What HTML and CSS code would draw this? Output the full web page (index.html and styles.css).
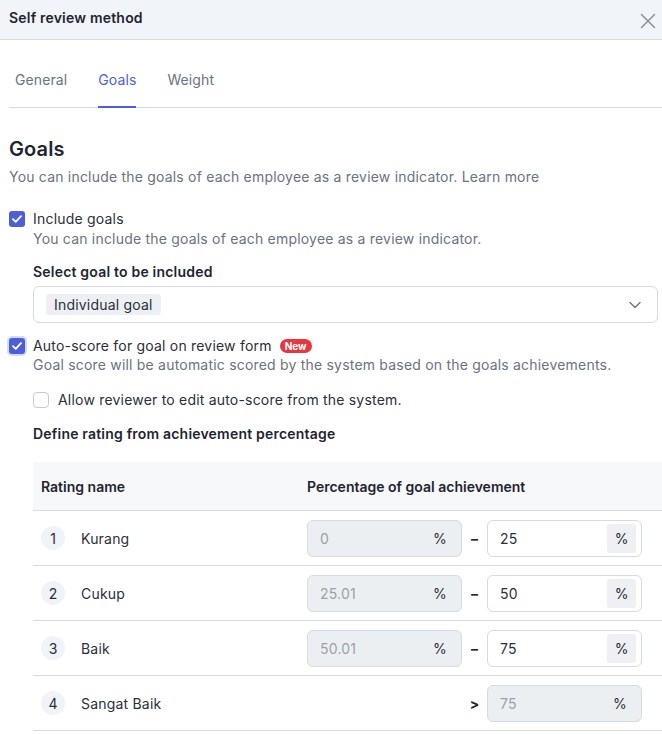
FILE: index.html
```html
<!DOCTYPE html>
<html>
<head>
<meta charset="utf-8">
<link rel="stylesheet" href="styles.css">
</head>
<body>
<div class="modal">
  <div class="header">
    <div class="title">Self review method</div>
    <svg class="close" width="16" height="16" viewBox="0 0 16 16"><path d="M1.5 1.5 L14.5 14.5 M14.5 1.5 L1.5 14.5" stroke="#8b9098" stroke-width="1.5" fill="none" stroke-linecap="round"/></svg>
  </div>
  <div class="tabs">
    <div class="tab">General</div>
    <div class="tab active">Goals</div>
    <div class="tab">Weight</div>
  </div>
  <div class="content">
    <h2 class="heading">Goals</h2>
    <p class="desc">You can include the goals of each employee as a review indicator. Learn more</p>

    <div class="check-row first">
      <span class="cb checked"><svg width="10" height="8" viewBox="0 0 10 8"><path d="M1 4.2 L3.7 6.8 L9 1.2" stroke="#fff" stroke-width="1.8" fill="none" stroke-linecap="round" stroke-linejoin="round"/></svg></span>
      <span class="label">Include goals</span>
    </div>
    <div class="indent">
      <p class="sub">You can include the goals of each employee as a review indicator.</p>
      <div class="field-label">Select goal to be included</div>
      <div class="select">
        <span class="chip">Individual goal</span>
        <svg class="chev" width="12" height="8" viewBox="0 0 12 8"><path d="M1 1.5 L6 6.5 L11 1.5" stroke="#6b7280" stroke-width="1.4" fill="none" stroke-linecap="round" stroke-linejoin="round"/></svg>
      </div>
    </div>

    <div class="check-row second">
      <span class="cb checked focus"><svg width="10" height="8" viewBox="0 0 10 8"><path d="M1 4.2 L3.7 6.8 L9 1.2" stroke="#fff" stroke-width="1.8" fill="none" stroke-linecap="round" stroke-linejoin="round"/></svg></span>
      <span class="label">Auto-score for goal on review form</span>
      <span class="badge">New</span>
    </div>
    <div class="indent">
      <p class="sub tight">Goal score will be automatic scored by the system based on the goals achievements.</p>
      <div class="check-row third">
        <span class="cb empty"></span>
        <span class="label">Allow reviewer to edit auto-score from the system.</span>
      </div>
      <div class="field-label define">Define rating from achievement percentage</div>

      <div class="table">
        <div class="thead">
          <div class="c1">Rating name</div>
          <div class="c2">Percentage of goal achievement</div>
        </div>
        <div class="row">
          <div class="c1"><span class="num">1</span><span class="name">Kurang</span></div>
          <div class="c2">
            <div class="inp disabled"><span class="val">0</span><span class="pct">%</span></div>
            <span class="sep">–</span>
            <div class="inp"><span class="val">25</span><span class="addon">%</span></div>
          </div>
        </div>
        <div class="row">
          <div class="c1"><span class="num">2</span><span class="name">Cukup</span></div>
          <div class="c2">
            <div class="inp disabled"><span class="val">25.01</span><span class="pct">%</span></div>
            <span class="sep">–</span>
            <div class="inp"><span class="val">50</span><span class="addon">%</span></div>
          </div>
        </div>
        <div class="row">
          <div class="c1"><span class="num">3</span><span class="name">Baik</span></div>
          <div class="c2">
            <div class="inp disabled"><span class="val">50.01</span><span class="pct">%</span></div>
            <span class="sep">–</span>
            <div class="inp"><span class="val">75</span><span class="addon">%</span></div>
          </div>
        </div>
        <div class="row">
          <div class="c1"><span class="num">4</span><span class="name">Sangat Baik</span></div>
          <div class="c2">
            <div class="spacer"></div>
            <span class="sep gt">&gt;</span>
            <div class="inp disabled"><span class="val">75</span><span class="pct">%</span></div>
          </div>
        </div>
      </div>
    </div>
  </div>
</div>
</body>
</html>
```
FILE: styles.css
```css
* { box-sizing: border-box; }
html, body { margin: 0; padding: 0; background: #fff; }
body {
  font-family: Inter, "Noto Sans", sans-serif;
  font-size: 14px;
  letter-spacing: 0.2px;
  color: #1f2937;
  width: 662px;
  height: 734px;
  overflow: hidden;
}
.header {
  height: 40px;
  background: #f1f4f8;
  border-bottom: 1px solid #d6dae1;
  display: flex;
  align-items: center;
  justify-content: space-between;
  padding: 0 6px 5px 9px;
}
.title { font-weight: 600; font-size: 14px; color: #1f2530; }
.close { margin-top: 7px; }
.tabs {
  display: flex;
  gap: 31px;
  margin-left: 9px;
  padding-left: 6px;
  padding-top: 30px;
  border-bottom: 1px solid #d6dae1;
  height: 68px;
}
.tab {
  line-height: 20px;
  color: #6b7280;
  height: 38px;
  letter-spacing: 0.1px;
}
.tab.active {
  color: #4a5fd8;
  border-bottom: 2px solid #4a5fd8;
}
.content { padding-left: 9px; }
.heading {
  margin: 27px 0 0;
  font-size: 20px;
  line-height: 28px;
  font-weight: 600;
  letter-spacing: 0.1px;
  color: #1f2530;
}
.desc { margin: 4px 0 0; line-height: 20px; color: #6b7280; }
.check-row {
  display: flex;
  align-items: center;
  line-height: 20px;
}
.check-row.first { margin-top: 22px; }
.check-row.second { margin-top: 13px; }
.check-row.third { margin-top: 15px; }
.cb {
  width: 16px; height: 16px;
  border-radius: 3px;
  display: inline-flex;
  align-items: center;
  justify-content: center;
  flex: none;
}
.cb.checked { background: #4c5fd6; }
.cb.focus { box-shadow: 0 0 0 2px #d3daf7; }
.cb.empty { border: 1px solid #c6cbd3; border-radius: 4px; background: #fff; }
.label { margin-left: 8px; color: #2a2f38; }
.check-row.third .label { margin-left: 9px; }
.badge {
  margin-left: 8px;
  background: #e5383f;
  color: #fff;
  font-size: 10px;
  font-weight: 700;
  letter-spacing: 0;
  line-height: 14px;
  padding: 0 5px;
  border-radius: 8px;
}
.indent { margin-left: 24px; }
.sub { margin: 0; line-height: 20px; color: #6b7280; }
.sub.tight { margin-top: -1px; }
.field-label {
  margin-top: 13px;
  line-height: 20px;
  font-weight: 600;
  color: #1f2530;
}
.field-label.define { margin-top: 14px; }
.select {
  margin-top: 4px;
  margin-right: 4px;
  height: 37px;
  border: 1px solid #d6dae1;
  border-radius: 6px;
  display: flex;
  align-items: center;
  justify-content: space-between;
  padding: 0 16px 0 12px;
}
.chip {
  background: #eceff3;
  border-radius: 4px;
  padding: 0 8px;
  line-height: 21px;
  color: #2a2f38;
}
.table { margin-top: 18px; }
.thead {
  display: flex;
  align-items: center;
  height: 49px;
  background: #f7f8fa;
  border-bottom: 1px solid #d6dae1;
  font-weight: 600;
  letter-spacing: 0;
  color: #1f2530;
}
.c1 { width: 274px; padding-left: 8px; display: flex; align-items: center; }
.c2 { display: flex; align-items: center; }
.row {
  display: flex;
  align-items: center;
  height: 55px;
  border-bottom: 1px solid #d6dae1;
}
.num {
  width: 24px; height: 24px;
  border-radius: 50%;
  background: #f0f3f8;
  display: inline-flex;
  align-items: center;
  justify-content: center;
  letter-spacing: 0;
  color: #2a2f38;
}
.name { margin-left: 16px; color: #2a2f38; }
.inp {
  width: 155px;
  height: 37px;
  border: 1px solid #d6dae1;
  border-radius: 6px;
  display: flex;
  align-items: center;
  justify-content: space-between;
  padding: 0 4px 0 12px;
  background: #fff;
}
.inp.disabled { background: #eceff2; padding-right: 14px; }
.inp.disabled .val { color: #9aa1ab; }
.val { color: #2a2f38; }
.pct { color: #2a2f38; }
.addon {
  background: #eef0f3;
  width: 29px;
  height: 29px;
  border-radius: 3px;
  display: inline-flex;
  align-items: center;
  justify-content: center;
  margin-right: 1px;
  letter-spacing: 0;
}
.sep {
  width: 25px;
  text-align: center;
  font-weight: 700;
  color: #1f2530;
}
.spacer { width: 155px; }
```
